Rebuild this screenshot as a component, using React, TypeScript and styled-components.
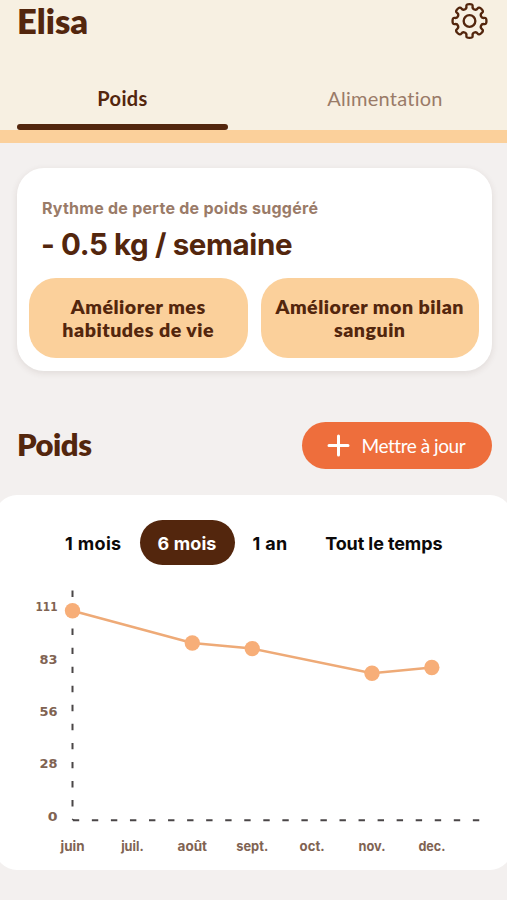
import React from 'react';
import styled, { createGlobalStyle } from 'styled-components';

const color = {
  brown: '#53260d',
  taupe: '#9a7b68',
  cream: '#f7f0e2',
  peach: '#fbd09b',
  page: '#f3f0ef',
  orange: '#ee6e3c',
  point: '#f7ae78',
  line: '#eeaa77',
  label: '#806352',
  axis: '#4a4647',
};

const humanist = `Lato, "Open Sans", sans-serif`;
const grotesque = `Inter, "Liberation Sans", sans-serif`;

const GlobalStyle = createGlobalStyle`
  * { box-sizing: border-box; }
  body { margin: 0; background: ${color.page}; overflow: hidden; }
  button { border: 0; margin: 0; padding: 0; background: none; cursor: pointer; }
`;

const Screen = styled.main`
  width: 507px;
  height: 900px;
  overflow: hidden;
  background: ${color.page};
  color: ${color.brown};
  font-family: ${humanist};
`;

const Header = styled.header`
  height: 143px;
  display: flex;
  flex-direction: column;
  background: ${color.cream};
  border-bottom: 13px solid ${color.peach};
`;

const TitleBar = styled.div`
  height: 67px;
  padding: 0 17px;
  display: flex;
  justify-content: space-between;
  align-items: flex-start;
`;

const Name = styled.h1`
  margin: 0;
  font-size: 34.5px;
  line-height: 42px;
  font-weight: 800;
  letter-spacing: 0;
`;

const IconButton = styled.button`
  display: flex;
  width: 37px;
  height: 38px;
  margin: 2px 2px 0 0;
  align-items: center;
`;

const Tabs = styled.nav`
  flex: 1;
  padding: 0 17px;
  display: grid;
  grid-template-columns: 211px 210px;
  justify-content: space-between;
`;

const Tab = styled.button<{ $active?: boolean }>`
  display: flex;
  flex-direction: column;
  align-items: center;
  justify-content: space-between;
  padding-top: 18px;
  color: ${(p) => (p.$active ? color.brown : color.taupe)};
  font: ${(p) => (p.$active ? 700 : 400)} 20px/26px ${humanist};
  letter-spacing: ${(p) => (p.$active ? 0.35 : 0.25)}px;

  &::after {
    content: '';
    width: 100%;
    height: 6px;
    border-radius: 3px;
    background: ${(p) => (p.$active ? color.brown : 'transparent')};
  }
`;

const GoalCard = styled.section`
  height: 203px;
  margin: 25px 15.5px 0 16.5px;
  padding: 30px 12.5px 0;
  border-radius: 27px;
  background: #fff;
  box-shadow: 0 2px 7px rgba(70, 50, 40, 0.11);
`;

const GoalLabel = styled.p`
  margin: 0;
  padding-left: 13px;
  color: ${color.taupe};
  font: 700 16px/20px ${grotesque};
  letter-spacing: 0.26px;
`;

const GoalValue = styled.p`
  margin: 9px 0 17px;
  padding-left: 12px;
  font: 700 29.5px/34px ${grotesque};
  letter-spacing: -0.38px;
  white-space: nowrap;
`;

const GoalActions = styled.div`
  display: grid;
  grid-template-columns: 1fr 1fr;
  gap: 13px;
`;

const GoalButton = styled.button`
  height: 80px;
  border-radius: 27px;
  background: ${color.peach};
  color: ${color.brown};
  font: 800 19.6px/23px ${humanist};
  letter-spacing: 0.5px;
`;

const SectionHead = styled.div`
  height: 47px;
  margin: 51px 15.5px 26px 17px;
  display: flex;
  align-items: center;
  justify-content: space-between;
`;

const SectionTitle = styled.h2`
  margin: -3px 0 0;
  font-size: 31px;
  line-height: 40px;
  font-weight: 800;
  letter-spacing: -0.5px;
`;

const UpdateButton = styled.button`
  width: 190px;
  height: 47px;
  display: flex;
  align-items: center;
  gap: 12px;
  padding-left: 25px;
  border-radius: 24px;
  background: ${color.orange};
  color: #fff;
  font: 400 19px/24px ${humanist};
  letter-spacing: -0.45px;
  white-space: nowrap;
`;

const ChartCard = styled.section`
  height: 375px;
  margin: 0 -5px;
  padding: 25px 5px 0;
  border-radius: 22px;
  background: #fff;
`;

const Ranges = styled.div`
  height: 45px;
  padding-left: 47px;
  display: flex;
`;

const Range = styled.button<{ $active?: boolean; $wide?: boolean }>`
  height: 45px;
  padding: 2px ${(p) => (p.$wide ? 19.5 : 18)}px 0;
  border-radius: 23px;
  background: ${(p) => (p.$active ? color.brown : 'transparent')};
  color: ${(p) => (p.$active ? '#fff' : '#0b0909')};
  font: 700 18px/24px ${grotesque};
  letter-spacing: ${(p) => (p.$wide ? -0.1 : p.$active ? 0.1 : 0.35)}px;
  white-space: nowrap;
`;

const Plot = styled.svg`
  display: block;
  width: 507px;
  height: 289px;
  margin-top: 15px;
`;

const MonthText = styled.text`
  fill: ${color.label};
  font: 700 13.2px ${grotesque};
`;

const ValueText = styled.text`
  fill: ${color.label};
  font: 700 13px "DejaVu Sans", sans-serif;
`;

const gearPath = (() => {
  const corners: [number, number][] = [];
  for (let i = 0; i < 8; i++) {
    const angle = i * 45 - 90;
    [[-12, 17.8], [12, 17.8], [12, 13], [33, 13]].forEach(([offset, r]) => {
      const t = ((angle + offset) * Math.PI) / 180;
      corners.push([19 + r * Math.cos(t), 19 + r * Math.sin(t)]);
    });
  }
  const mid = (i: number) => {
    const a = corners[i % corners.length];
    const b = corners[(i + 1) % corners.length];
    return `${((a[0] + b[0]) / 2).toFixed(2)} ${((a[1] + b[1]) / 2).toFixed(2)}`;
  };
  const curves = corners.map((_, i) => {
    const c = corners[(i + 1) % corners.length];
    return `Q${c[0].toFixed(2)} ${c[1].toFixed(2)} ${mid(i + 1)}`;
  });
  return `M${mid(0)}${curves.join('')}Z`;
})();

const Gear = () => (
  <svg width="37" height="38" viewBox="0 0 38 38" fill="none" stroke={color.brown} strokeWidth="2.4">
    <path d={gearPath} strokeLinejoin="round" />
    <circle cx="19" cy="19" r="6" />
  </svg>
);

const Plus = () => (
  <svg width="23" height="23" viewBox="0 0 23 23" stroke="#fff" strokeWidth="3" strokeLinecap="round">
    <path d="M11.5 2v19M2 11.5h19" />
  </svg>
);

const yLabels = [
  { text: '111', y: 31, w: 22 },
  { text: '83', y: 83.5, w: 18 },
  { text: '56', y: 136, w: 18 },
  { text: '28', y: 188.3, w: 18 },
  { text: '0', y: 240.5, w: 9.8 },
];

const months = [
  { text: 'juin', w: 24 },
  { text: 'juil.', w: 22.5 },
  { text: 'août', w: 29.5 },
  { text: 'sept.', w: 32 },
  { text: 'oct.', w: 25 },
  { text: 'nov.', w: 27 },
  { text: 'dec.', w: 27 },
];

const points = [
  [72.5, 30.8],
  [192.3, 63],
  [252.2, 68.6],
  [372, 93.2],
  [431.8, 87.5],
];

const WeightChart = () => (
  <Plot viewBox="0 0 507 289">
    <g stroke={color.axis} strokeWidth="2" strokeDasharray="6.4 12.65">
      <path d="M72.5 10.5V237" />
      <path d="M72.8 240.3H480" />
    </g>
    <path d="M72 239l2.5 1.5" stroke={color.axis} strokeWidth="1.3" />
    {yLabels.map((l) => (
      <ValueText key={l.text} x={57.5 - l.w} y={l.y} textLength={l.w} lengthAdjust="spacingAndGlyphs">
        {l.text}
      </ValueText>
    ))}
    {months.map((m, i) => (
      <MonthText key={m.text} x={72.5 + i * 59.9 - m.w / 2} y={271} textLength={m.w} lengthAdjust="spacingAndGlyphs">
        {m.text}
      </MonthText>
    ))}
    <polyline points={points.map((p) => p.join(',')).join(' ')} fill="none" stroke={color.line} strokeWidth="2.5" />
    {points.map(([x, y]) => (
      <circle key={x} cx={x} cy={y} r="7.7" fill={color.point} />
    ))}
  </Plot>
);

export default function App() {
  return (
    <Screen>
      <GlobalStyle />
      <Header>
        <TitleBar>
          <Name>Elisa</Name>
          <IconButton aria-label="Réglages"><Gear /></IconButton>
        </TitleBar>
        <Tabs>
          <Tab $active>Poids</Tab>
          <Tab>Alimentation</Tab>
        </Tabs>
      </Header>
      <GoalCard>
        <GoalLabel>Rythme de perte de poids suggéré</GoalLabel>
        <GoalValue>- 0.5 kg / semaine</GoalValue>
        <GoalActions>
          <GoalButton>Améliorer mes<br />habitudes de vie</GoalButton>
          <GoalButton>Améliorer mon bilan<br />sanguin</GoalButton>
        </GoalActions>
      </GoalCard>
      <SectionHead>
        <SectionTitle>Poids</SectionTitle>
        <UpdateButton><Plus />Mettre à jour</UpdateButton>
      </SectionHead>
      <ChartCard>
        <Ranges>
          <Range>1 mois</Range>
          <Range $active>6 mois</Range>
          <Range>1 an</Range>
          <Range $wide>Tout le temps</Range>
        </Ranges>
        <WeightChart />
      </ChartCard>
    </Screen>
  );
}
